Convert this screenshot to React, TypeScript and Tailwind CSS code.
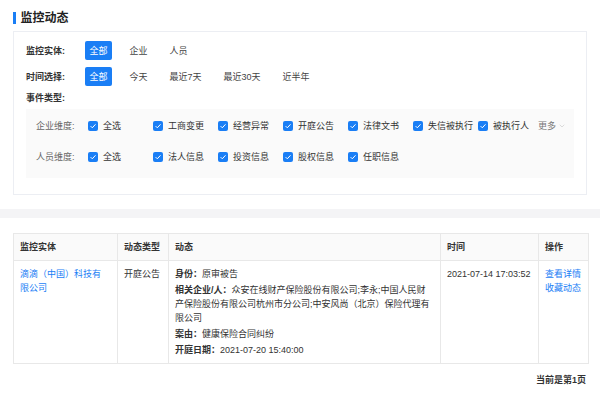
import { ChevronDown } from "lucide-react";

type CheckItemProps = {
  label: string;
  width?: string;
};

const Check = () => (
  <span className="flex h-[10px] w-[10px] shrink-0 items-center justify-center rounded-[2px] bg-[#1a7ef5]">
    <svg width="8" height="8" viewBox="0 0 8 8">
      <path d="M1.6 4.1 L3.3 5.8 L6.5 2.3" stroke="white" strokeWidth="1" fill="none" />
    </svg>
  </span>
);

const CheckItem = ({ label, width = "w-[65px]" }: CheckItemProps) => (
  <div className={`flex shrink-0 items-center gap-[5px] ${width}`}>
    <Check />
    <span className="whitespace-nowrap text-[#333]">{label}</span>
  </div>
);

const Option = ({ label, active }: { label: string; active?: boolean }) => (
  <span
    className={
      active
        ? "flex h-[19px] items-center rounded-[2px] bg-[#1a7ef5] px-[4.5px] text-white"
        : "flex h-[19px] items-center px-[4.5px] text-[#444]"
    }
  >
    {label}
  </span>
);

const FilterRow = ({ label, options }: { label: string; options: string[] }) => (
  <div className="flex h-[19px] items-center">
    <span className="w-[59px] shrink-0 font-semibold text-[#333]">{label}</span>
    <div className="flex items-center gap-[13px]">
      {options.map((o, i) => (
        <Option key={o} label={o} active={i === 0} />
      ))}
    </div>
  </div>
);

const companyItems = ["全选", "工商变更", "经营异常", "开庭公告", "法律文书", "失信被执行"];
const personItems = ["全选", "法人信息", "投资信息", "股权信息", "任职信息"];

export default function App() {
  return (
    <div
      className="h-[396px] w-[600px] overflow-hidden bg-white text-[9px] leading-[14px] text-[#333]"
      style={{ fontFamily: '"Liberation Sans", "Noto Sans CJK SC", sans-serif' }}
    >
      <div className="px-[13px]">
        <div className="mt-[11px] flex h-[14px] items-center gap-[5px]">
          <span className="h-[12px] w-[2.5px] bg-[#1a7ef5]" />
          <span className="text-[12px] font-semibold text-[#222]">监控动态</span>
        </div>

        <div className="mt-[6px] border border-[#eceef3] px-[12px] pt-[9px] pb-[16px]">
          <FilterRow label="监控实体:" options={["全部", "企业", "人员"]} />
          <div className="mt-[7px]">
            <FilterRow label="时间选择:" options={["全部", "今天", "最近7天", "最近30天", "近半年"]} />
          </div>
          <div className="mt-[5px] font-semibold text-[#333]">事件类型:</div>
          <div className="mt-[4px] bg-[#fafafa] px-[10px] pt-[10px] pb-[14px]">
            <div className="flex h-[14px] items-center">
              <span className="w-[52px] shrink-0 text-[#666]">企业维度:</span>
              {companyItems.map((c) => (
                <CheckItem key={c} label={c} />
              ))}
              <CheckItem label="被执行人" width="w-[60px]" />
              <span className="flex shrink-0 items-center gap-[2px] whitespace-nowrap text-[#777]">
                更多
                <ChevronDown size={8} strokeWidth={1.5} className="text-[#bbb]" />
              </span>
            </div>
            <div className="mt-[17px] flex h-[14px] items-center">
              <span className="w-[52px] shrink-0 text-[#666]">人员维度:</span>
              {personItems.map((c) => (
                <CheckItem key={c} label={c} />
              ))}
            </div>
          </div>
        </div>
      </div>

      <div className="mt-[14px] h-[9px] bg-[#f4f4f6]" />

      <div className="px-[13px]">
        <table className="mt-[15px] w-[575px] table-fixed border-collapse">
          <colgroup>
            <col className="w-[104px]" />
            <col className="w-[51px]" />
            <col className="w-[272px]" />
            <col className="w-[98px]" />
            <col className="w-[50px]" />
          </colgroup>
          <thead>
            <tr className="bg-[#fafafa]">
              {["监控实体", "动态类型", "动态", "时间", "操作"].map((h) => (
                <th
                  key={h}
                  className="h-[27px] border border-[#e8e8e8] px-[6px] text-left font-semibold text-[#333]"
                >
                  {h}
                </th>
              ))}
            </tr>
          </thead>
          <tbody>
            <tr className="align-top">
              <td className="border border-[#e8e8e8] px-[6px] pt-[6px] pb-[6px] text-[#1a7ef5]">
                滴滴（中国）科技有
                <br />
                限公司
              </td>
              <td className="border border-[#e8e8e8] px-[6px] pt-[6px] pb-[6px]">开庭公告</td>
              <td className="border border-[#e8e8e8] px-[6px] pt-[6px] pb-[6px]">
                <div className="flex flex-col gap-[2px]">
                  <p>
                    <span className="font-semibold">身份：</span>原审被告
                  </p>
                  <p>
                    <span className="font-semibold">相关企业/人：</span>
                    众安在线财产保险股份有限公司;李永;中国人民财
                    <br />
                    产保险股份有限公司杭州市分公司;中安风尚（北京）保险代理有
                    <br />
                    限公司
                  </p>
                  <p>
                    <span className="font-semibold">案由：</span>健康保险合同纠纷
                  </p>
                  <p>
                    <span className="font-semibold">开庭日期：</span>2021-07-20 15:40:00
                  </p>
                </div>
              </td>
              <td className="border border-[#e8e8e8] px-[6px] pt-[6px] pb-[6px]">2021-07-14 17:03:52</td>
              <td className="border border-[#e8e8e8] px-[6px] pt-[6px] pb-[6px] text-[#1a7ef5]">
                查看详情
                <br />
                收藏动态
              </td>
            </tr>
          </tbody>
        </table>
        <div className="mt-[9px] flex justify-end pr-[1px] font-semibold text-[#333]">当前是第1页</div>
      </div>
    </div>
  );
}
